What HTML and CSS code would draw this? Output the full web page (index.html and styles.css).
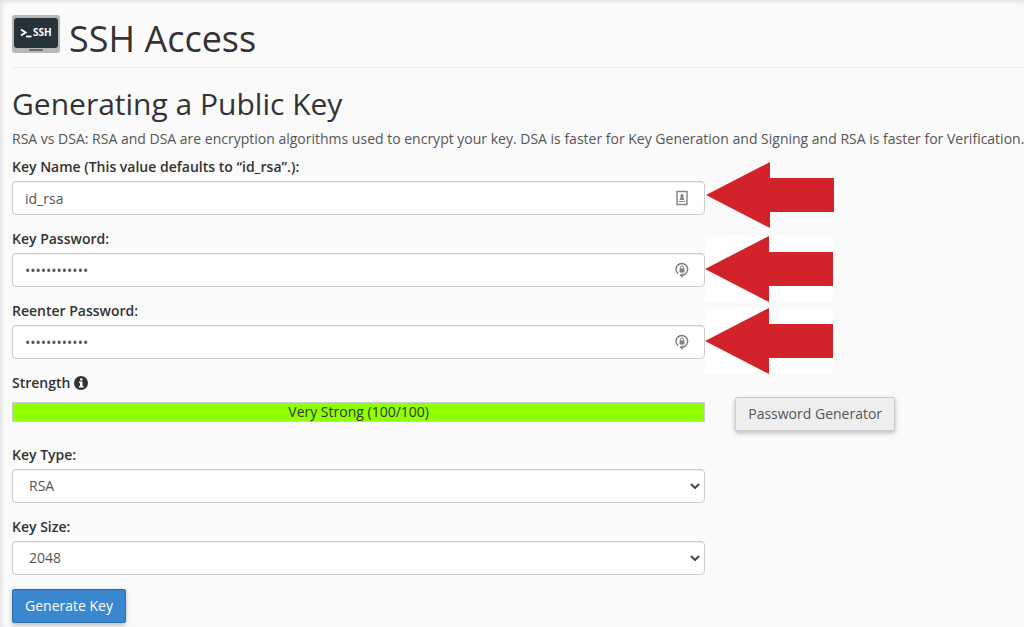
FILE: index.html
```html
<!DOCTYPE html>
<html lang="en">
<head>
    <meta charset="UTF-8">
    <meta name="viewport" content="width=device-width, initial-scale=1.0">
    <title>SSH Access</title>
    <link rel="stylesheet" href="styles.css">
</head>
<body>
    <main class="content">
        <h1 class="page-header">
            <svg class="page-icon" viewBox="0 0 48 38" aria-hidden="true">
                <rect width="48" height="38" rx="3" fill="#b9b8b8"/>
                <rect x="2" y="3" width="44" height="30" rx="3" fill="#26323c"/>
                <rect x="17" y="34" width="14" height="2" rx="1" fill="#6d6d6d"/>
                <path d="M9 14.500l4.500 3-4.500 3" fill="none" stroke="#fff" stroke-width="2"/>
                <path d="M14 21.500h5.500" stroke="#fff" stroke-width="1.800"/>
                <text class="icon-text" x="21" y="21">SSH</text>
            </svg>
            SSH Access
        </h1>

        <h2>Generating a Public Key</h2>
        <p class="description">RSA vs DSA: RSA and DSA are encryption algorithms used to encrypt your key. DSA is faster for Key Generation and Signing and RSA is faster for Verification.</p>

        <form>
            <div class="form-group">
                <label for="keyName">Key Name (This value defaults to “id_rsa”.):</label>
                <div class="field">
                    <input type="text" id="keyName" class="form-control" value="id_rsa">
                    <svg class="field-icon" viewBox="0 0 16 16" aria-hidden="true">
                        <rect x="3" y="1.500" width="10" height="13" fill="#fff" stroke="#888" stroke-width="1.500"/>
                        <circle cx="8" cy="5.500" r="1.500" fill="#777"/>
                        <path d="M6.800 6.500h2.400l1.300 3.500h-5z" fill="#888"/>
                        <path d="M5 11.500h6" stroke="#888"/>
                    </svg>
                    <svg class="arrow" viewBox="0 0 128 66" aria-hidden="true"><path d="M0 33L64 0v16h64v34H64v16z"/></svg>
                </div>
            </div>
            <div class="form-group">
                <label for="password">Key Password:</label>
                <div class="field">
                    <input type="password" id="password" class="form-control" value="abcdefghijkl">
                    <svg class="field-icon" viewBox="0 0 16 16" aria-hidden="true">
                        <path d="M4.200 11.800A5.800 5.800 0 1 1 11.500 11.800L8 13.500" fill="none" stroke="#808080" stroke-width="1.500"/>
                        <path d="M6.500 7V5.500a1.500 1.500 0 0 1 3 0V7" fill="none" stroke="#808080"/>
                        <rect x="5.500" y="6.500" width="5" height="4" fill="#808080"/>
                        <path d="M5.500 13.500l3-2.500v5z" fill="#808080"/>
                    </svg>
                    <svg class="arrow arrow-boxed" viewBox="0 0 128 66" aria-hidden="true"><path d="M0 33L64 0v16h64v34H64v16z"/></svg>
                </div>
            </div>
            <div class="form-group">
                <label for="password2">Reenter Password:</label>
                <div class="field">
                    <input type="password" id="password2" class="form-control" value="abcdefghijkl">
                    <svg class="field-icon" viewBox="0 0 16 16" aria-hidden="true">
                        <path d="M4.200 11.800A5.800 5.800 0 1 1 11.500 11.800L8 13.500" fill="none" stroke="#808080" stroke-width="1.500"/>
                        <path d="M6.500 7V5.500a1.500 1.500 0 0 1 3 0V7" fill="none" stroke="#808080"/>
                        <rect x="5.500" y="6.500" width="5" height="4" fill="#808080"/>
                        <path d="M5.500 13.500l3-2.500v5z" fill="#808080"/>
                    </svg>
                    <svg class="arrow arrow-boxed" viewBox="0 0 128 66" aria-hidden="true"><path d="M0 33L64 0v16h64v34H64v16z"/></svg>
                </div>
            </div>
            <div class="form-group">
                <div class="strength-label">
                    Strength
                    <svg class="info-icon" viewBox="0 0 14 14" aria-hidden="true">
                        <circle cx="7" cy="7" r="7" fill="#333"/>
                        <path d="M6 2.500h2.500v2H6zM5 5.500h3.500v4.500h1v1.500H5V10h1V7H5z" fill="#fff"/>
                    </svg>
                </div>
                <div class="strength-row">
                    <div class="strength-bar">Very Strong (100/100)</div>
                    <button type="button" class="btn">Password Generator</button>
                </div>
            </div>
            <div class="form-group">
                <label for="keyType">Key Type:</label>
                <div class="field">
                    <select id="keyType" class="form-control">
                        <option>RSA</option>
                        <option>DSA</option>
                    </select>
                    <svg class="chevron" viewBox="0 0 10 6" aria-hidden="true"><path d="M1 1l4 4 4-4"/></svg>
                </div>
            </div>
            <div class="form-group">
                <label for="keySize">Key Size:</label>
                <div class="field">
                    <select id="keySize" class="form-control">
                        <option>2048</option>
                        <option>4096</option>
                    </select>
                    <svg class="chevron" viewBox="0 0 10 6" aria-hidden="true"><path d="M1 1l4 4 4-4"/></svg>
                </div>
            </div>
            <button type="submit" class="btn btn-primary">Generate Key</button>
        </form>
    </main>
</body>
</html>
```
FILE: styles.css
```css
* {
    box-sizing: border-box;
}
body {
    margin: 0;
    font-family: "Open Sans", sans-serif;
    font-size: 14px;
    line-height: 20px;
    color: #333;
    background-color: #fafafa;
}
.content {
    padding: 14px 0 4px 12px;
    box-shadow: inset 2px 2px 4px rgba(0, 0, 0, 0.1);
}
h1, h2 {
    margin: 0;
    font-weight: 400;
}
.page-header {
    display: flex;
    align-items: flex-start;
    gap: 9px;
    padding-bottom: 4px;
    border-bottom: 1px solid #eee;
    font-size: 36px;
    line-height: 49px;
}
.page-icon {
    width: 48px;
    height: 38px;
    margin-top: 1px;
}
.icon-text {
    font-size: 10px;
    font-weight: 700;
    fill: #fff;
}
h2 {
    margin-top: 19px;
    font-size: 30px;
    line-height: 33px;
}
.description {
    margin: 9px 0 8px;
    color: #555;
    white-space: nowrap;
}
.form-group {
    margin-bottom: 14px;
}
label {
    display: block;
    margin-bottom: 4px;
    font-weight: 600;
}
.field {
    position: relative;
    width: 68.5%;
}
.form-control {
    display: block;
    width: 100%;
    height: 34px;
    padding: 6px 12px;
    font: inherit;
    color: #555;
    background-color: #fff;
    border: 1px solid #ccc;
    border-radius: 4px;
    box-shadow: inset 0 1px 1px rgba(0, 0, 0, 0.08);
}
select.form-control {
    padding: 6px 16px;
    appearance: none;
}
.field-icon {
    position: absolute;
    top: 9px;
    right: 15px;
    width: 16px;
    height: 16px;
}
.chevron {
    position: absolute;
    top: 14px;
    right: 5px;
    width: 10px;
    height: 6px;
    fill: none;
    stroke: #444;
    stroke-width: 2;
    pointer-events: none;
}
.arrow {
    position: absolute;
    top: -19px;
    left: calc(100% + 1px);
    width: 128px;
    height: 66px;
    fill: #d2232a;
}
.arrow-boxed {
    top: -17px;
    left: 100%;
    background-color: #fff;
}
.strength-label {
    display: flex;
    align-items: center;
    gap: 4px;
    margin-bottom: 4px;
    font-weight: 600;
}
.info-icon {
    width: 14px;
    height: 14px;
}
.strength-row {
    display: flex;
    align-items: flex-start;
    gap: 30px;
    height: 34px;
}
.strength-bar {
    width: 68.5%;
    height: 20px;
    margin-top: 5px;
    line-height: 18px;
    text-align: center;
    background-color: #90ff00;
    border: 1px solid #ccc;
}
.btn {
    height: 34px;
    padding: 6px 12px;
    font: inherit;
    color: #555;
    background-color: #eee;
    border: 1px solid #ccc;
    border-radius: 2px;
    box-shadow: 0 2px 5px rgba(0, 0, 0, 0.26);
    cursor: pointer;
}
.btn-primary {
    color: #fff;
    background-color: #3a87cf;
    border-color: #2a6fb0;
}
```
